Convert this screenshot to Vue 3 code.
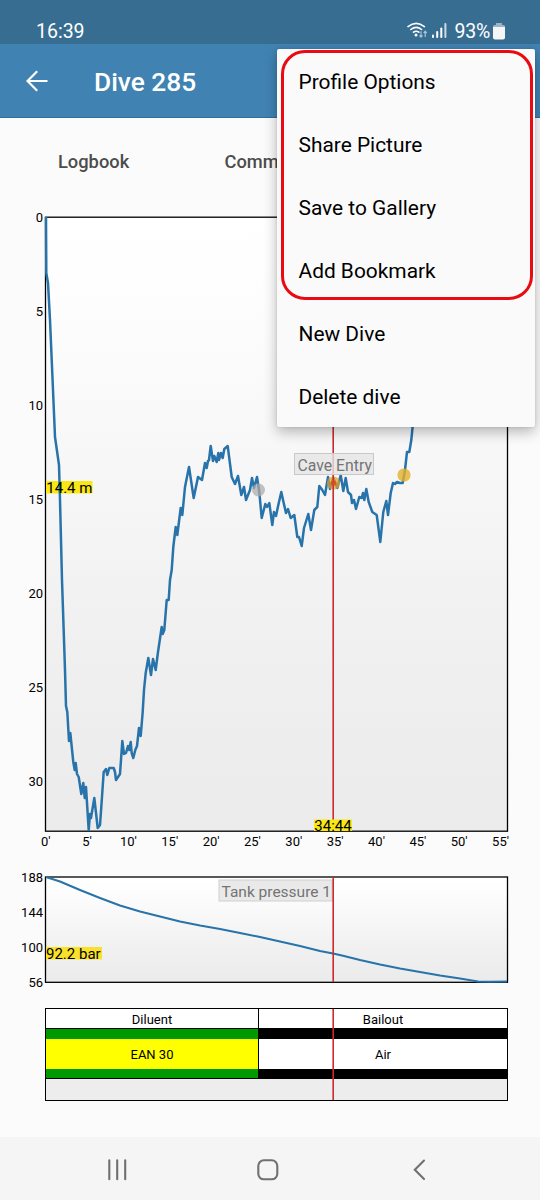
<script setup>
const menuItems = ['Profile Options', 'Share Picture', 'Save to Gallery', 'Add Bookmark', 'New Dive', 'Delete dive']
const depths = [0, 5, 10, 15, 20, 25, 30]
const minutes = [0, 5, 10, 15, 20, 25, 30, 35, 40, 45, 50, 55]
const pressures = [188, 144, 100, 56]

const depthLine =
  '46,217 46.3,273 48,283 50,320 53,390 55,437 59,465 60,500 62,580 65,670 66,706 67.3,712 69,741 70.3,733 ' +
  '73.3,762 74.7,770 75.7,763 77,774 78.7,777 81.3,794 83.3,783 84.7,798 86,787 88.7,830 90,814 91,818 94.3,798 ' +
  '97.7,828 100,825 101.3,807 103.7,772 106,769 107.3,775 109.3,768 113.7,768 115,772 116,780 120,774 121,760 ' +
  '122.3,741 124,754 126,753 128,746 129.3,750 130.7,742 131.7,753 133.3,758 135.3,750 137,746 139,728 140.7,736 ' +
  '142.7,712 144,690 145.7,673 148.3,658 151,675 153,659 155.7,670 158,652 161.7,627 162.7,634 164.3,630 166.7,600 ' +
  '168.7,600 170,580 171.7,570 173.3,547 175.7,527 177.3,535 180.7,508 182.3,515 185,487 189,467 193.7,498 198,477 ' +
  '202,480 205,463 206.7,468 208,461 209,460 210.7,446 213,461 214.3,456 216.7,462 218.3,453 219,460 221,453 ' +
  '222.7,458 224.3,449 227.7,446 231.7,477 235,484 238,476 241.3,495 244,487 246,500 250,490 252,478 254,488 ' +
  '257,477 259.3,492 261.7,518 265.3,504 267,507 269.3,503 272.3,525 274,512 276,516 278.3,505 281.3,492 283.7,503 ' +
  '286,513 288,509 290.7,518 294.3,515 297.3,537 299,537 301.7,546 304,528 308.3,514 311,530 314.3,510 317.3,507 ' +
  '319.3,486 322.3,490 325,495 328,477 330,489 333.3,478 337.3,488 340.7,475 343.3,491 345.7,478 348,492 351,495 ' +
  '352,503 354,500 356,509 359.3,497 361.7,498 363,493 364.3,500 366.3,489 368.7,502 372.3,512 376.7,515 380.3,542 ' +
  '383.3,512 386.3,501 388,515 390.7,493 393,483 395,484 397,482 400,483 402.7,483 405,470 407,452 409.3,452 ' +
  '411.3,440 413.3,420 415,400'
const tankLine =
  '46,877 60,881.5 80,890 100,898 120,905.5 140,911.5 160,916.5 180,921.5 200,925.5 220,929 240,933 260,937 280,941.5 ' +
  '300,946 320,951 333,953.5 342,955.5 360,960 380,964.5 400,968.5 420,972 440,975.500 460,978.500 478,981.5 490,981.800 507,981.5'
</script>

<template>
  <div class="screen">
    <header class="status">
      <span class="clock">16:39</span>
      <div class="indicators">
        <svg class="wifi" width="21" height="17" viewBox="0 0 21 17">
          <g fill="none" stroke="#fff" stroke-width="1.6" stroke-linecap="round">
            <path d="M1 4.6Q9.2-2 17.4 4.6" />
            <path d="M3.8 7.5Q9.2 3.1 14.6 7.5" />
            <path d="M6.5 10.2Q9.2 8.2 11.8 10.2" />
          </g>
          <circle cx="9" cy="13" r="1.5" fill="#fff" />
          <path d="M14 9.3V15M12.5 13.5L14 15.2L15.5 13.5M18.2 15V9.5M16.7 11L18.2 9.2L19.7 11" fill="none" stroke="#a6c3d8" stroke-width="1.2" />
        </svg>
        <svg class="signal" width="15" height="16" viewBox="0 0 15 16" fill="#fff">
          <rect x="0" y="11.5" width="2" height="3.5" rx="1" />
          <rect x="4.2" y="8" width="2" height="7" rx="1" />
          <rect x="8.3" y="4.5" width="2" height="10.5" rx="1" />
          <rect x="12.4" y="0" width="2" height="15" rx="1" opacity=".75" />
        </svg>
        <span class="percent">93%</span>
        <svg class="battery" width="12" height="17" viewBox="0 0 12 17">
          <path d="M3 0h6v2h1.5q1.5 0 1.5 1.5v1H0v-1Q0 2 1.500 2H3z" fill="#9bb5c6" />
          <path d="M0 4h12v10.500q0 2-2 2H2q-2 0-2-2z" fill="#f4f5f6" />
        </svg>
      </div>
    </header>

    <div class="appbar">
      <svg width="22" height="22" viewBox="0 0 22 22" fill="none" stroke="#fff" stroke-width="2.2">
        <path d="M21.500 11H2M11.200 1.200L1.500 11l9.700 9.800" />
      </svg>
      <h1>Dive 285</h1>
    </div>

    <nav class="tabs">
      <span>Logbook</span>
      <span>Comments</span>
    </nav>

    <svg class="depth" width="540" height="650" viewBox="0 206 540 650">
      <defs>
        <linearGradient id="shade" x1="0" y1="0" x2="0" y2="1">
          <stop offset="0" stop-color="#fff" />
          <stop offset=".15" stop-color="#fdfdfd" />
          <stop offset=".7" stop-color="#f0f0f0" />
          <stop offset="1" stop-color="#ebebeb" />
        </linearGradient>
      </defs>
      <rect x="45.500" y="217.200" width="462" height="614" fill="url(#shade)" stroke="#000" stroke-width="1.300" />
      <g class="axis" text-anchor="end">
        <text v-for="d in depths" :key="d" x="43" :y="222 + d * 18.810">{{ d }}</text>
      </g>
      <g class="axis" text-anchor="middle">
        <text v-for="m in minutes" :key="m" :x="45.700 + m * 8.270" y="845.500">{{ m }}'</text>
      </g>
      <rect x="46" y="481" width="46.500" height="12.500" fill="#f9e716" />
      <polyline :points="depthLine" class="line" stroke-width="2.500" />
      <text x="46.300" y="493" class="reading">14.4 m</text>
      <circle cx="258.500" cy="490" r="6.500" fill="#aaa" opacity=".72" />
      <circle cx="404" cy="475" r="6.600" fill="#e3b029" opacity=".8" />
      <circle cx="333.500" cy="483" r="6.600" fill="#e3a029" opacity=".72" />
      <path d="M333.200 217V831" stroke="#cc2a2d" stroke-width="1.600" />
      <circle cx="333.500" cy="483" r="2.800" fill="#df481b" opacity=".8" />
      <rect x="294.500" y="453.500" width="79" height="21" fill="#e5e5e5" fill-opacity=".8" stroke="#c9c9c9" />
      <text x="297.500" y="470.800" class="tag">Cave Entry</text>
      <rect x="314" y="819.500" width="38" height="11.500" fill="#f9e716" />
      <text x="333" y="831" text-anchor="middle" class="reading">34:44</text>
    </svg>

    <svg class="tank" width="540" height="128" viewBox="0 866 540 128">
      <rect x="45.500" y="877" width="462" height="105.300" fill="url(#shade)" stroke="#000" stroke-width="1.300" />
      <g class="axis" text-anchor="end">
        <text v-for="(p, i) in pressures" :key="p" x="43" :y="882 + i * 35.100">{{ p }}</text>
      </g>
      <rect x="46" y="947" width="56" height="12.500" fill="#f9e02a" />
      <rect x="219" y="880" width="113" height="21" fill="#e9e9e9" stroke="#cfcfcf" />
      <text x="221.500" y="897.300" class="tag narrow">Tank pressure 1</text>
      <polyline :points="tankLine" class="line" stroke-width="2" />
      <path d="M333.200 877V982" stroke="#cc2a2d" stroke-width="1.600" />
      <text x="46" y="959" class="reading">92.2 bar</text>
    </svg>

    <section class="gases">
      <div class="gas diluent">
        <div class="kind">Diluent</div>
        <div class="mix">EAN 30</div>
      </div>
      <div class="gas bailout">
        <div class="kind">Bailout</div>
        <div class="mix">Air</div>
      </div>
      <div class="rest"></div>
      <svg class="cursor" width="3" height="91" viewBox="0 0 3 91">
        <path d="M1.200 0V91" stroke="#cc2a2d" stroke-width="1.600" />
      </svg>
    </section>

    <footer class="system">
      <svg width="540" height="63" viewBox="0 0 540 63" fill="none" stroke="#707070" stroke-width="2.100">
        <path d="M109.300 23.300V42.300M117.200 23.300V42.300M125.200 23.300V42.300" stroke-linecap="round" />
        <rect x="258.300" y="23.300" width="19" height="19" rx="5.500" />
        <path d="M424 23.500L414.800 32.700L424 42" stroke-linecap="round" />
      </svg>
    </footer>

    <div class="menu">
      <div v-for="item in menuItems" :key="item" class="item">{{ item }}</div>
      <div class="highlight"></div>
    </div>
  </div>
</template>

<style>
body {
  margin: 0;
  background: #fafafa;
}
</style>

<style scoped>
.screen {
  position: relative;
  display: flex;
  flex-direction: column;
  box-sizing: border-box;
  width: 540px;
  height: 1200px;
  overflow: hidden;
  background: #fbfbfb;
  color: #000;
  font-family: Roboto, "Liberation Sans", sans-serif;
}
svg {
  display: block;
  flex: none;
}
.status {
  display: flex;
  flex: none;
  justify-content: space-between;
  box-sizing: border-box;
  height: 44px;
  padding: 20px 35px 0 36px;
  background: #386d92;
  color: #fff;
  font-size: 19.500px;
  line-height: 23px;
}
.indicators {
  display: flex;
}
.wifi {
  margin: 2px 4px 0 0;
}
.signal {
  margin: 3px 7px 0 0;
}
.percent {
  letter-spacing: -0.200px;
}
.battery {
  margin: 3px 0 0 3px;
}
.appbar {
  display: flex;
  flex: none;
  align-items: center;
  box-sizing: border-box;
  height: 74px;
  padding-left: 26px;
  border-bottom: 1px solid #326c98;
  background: #4083b3;
  color: #fff;
}
h1 {
  margin: 2px 0 0 46px;
  font-size: 26.300px;
  font-weight: 500;
  line-height: 30px;
}
.tabs {
  display: flex;
  flex: none;
  box-sizing: border-box;
  height: 88px;
  padding: 33px 0 0 58px;
  color: #4c4c4c;
  font-size: 18.300px;
  font-weight: 500;
  line-height: 22px;
}
.tabs span:first-child {
  width: 166.500px;
}
.axis {
  font-size: 13px;
}
.line {
  fill: none;
  stroke: #2873aa;
  stroke-linejoin: round;
}
.reading {
  font-size: 15px;
}
.tag {
  fill: #747474;
  font-size: 15.800px;
}
.narrow {
  font-size: 15.500px;
}
.tank {
  margin-top: 10px;
}
.gases {
  position: relative;
  display: grid;
  grid-template-columns: 212px 249px;
  grid-template-rows: 69px 22px;
  flex: none;
  box-sizing: border-box;
  width: 463px;
  height: 93px;
  margin: 14px 0 0 45px;
  border: 1px solid #000;
  font-size: 13px;
  text-align: center;
}
.gas {
  display: grid;
  grid-template-rows: 20px 49px;
}
.kind {
  box-sizing: border-box;
  line-height: 21px;
  background: #fff;
  border-bottom: 1px solid #000;
}
.mix {
  box-sizing: border-box;
  border: solid #009900;
  border-width: 10px 0 9px;
  background: #ff0;
  line-height: 32px;
}
.bailout {
  border-left: 1px solid #000;
}
.bailout .mix {
  border-color: #000;
  background: #fff;
}
.rest {
  grid-column: 1 / 3;
  border-top: 1px solid #000;
  background: #ededed;
}
.cursor {
  position: absolute;
  left: 286px;
  top: 0;
}
.system {
  flex: none;
  height: 63px;
  margin-top: auto;
  background: #f5f5f5;
}
.menu {
  position: absolute;
  left: 277px;
  top: 49px;
  box-sizing: border-box;
  width: 258px;
  height: 378px;
  border-radius: 2px;
  background: #fafafa;
  box-shadow: 0 5px 14px rgba(0, 0, 0, 0.28), 0 0 3px rgba(0, 0, 0, 0.12);
}
.item {
  height: 63px;
  padding-left: 21.500px;
  font-size: 20.900px;
  line-height: 66px;
}
.highlight {
  position: absolute;
  left: 4px;
  top: 1px;
  box-sizing: border-box;
  width: 252px;
  height: 250px;
  border: 3px solid #e90b12;
  border-radius: 24px;
}
</style>
